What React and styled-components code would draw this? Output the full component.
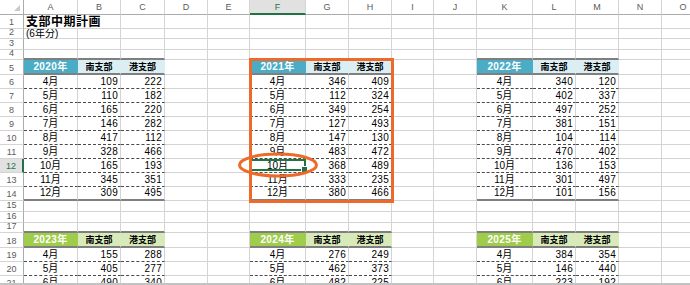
import React from 'react';
import styled, { createGlobalStyle } from 'styled-components';

const GRID = '#d4d4d4';
const HEAD_LINE = '#ababab';
const THICK = '#7f7f7f';
const DASH = '#4a4a4a';
const ACCENT = '#217346';
const ORANGE = '#ee6a2b';
const FONT = '"Liberation Sans", "Noto Sans CJK JP", sans-serif';

const THEMES = {
  aqua: { strong: '#4bacc6', light: '#daeef3' },
  green: { strong: '#9fcd4b', light: '#d8eab9' },
};

const COL_LETTERS = 'ABCDEFGHIJKLMNO'.split('');
const COL_W = [54, 43, 44, 43, 42, 56, 43, 43, 42, 43, 56, 43, 43, 43, 43];
const ROW_H = [14, 10, 11, 10, 15, 14, 14, 14, 14, 14, 14, 14, 14, 14, 11, 11, 10, 15, 14, 14, 14];
const HEAD_H = 15;
const MONTHS = ['4月', '5月', '6月', '7月', '8月', '9月', '10月', '11月', '12月'];

const TABLES = [
  { year: 2020, c: 1, r: 5, theme: 'aqua', rows: [[109, 222], [110, 182], [165, 220], [146, 282], [417, 112], [328, 466], [165, 193], [345, 351], [309, 495]] },
  { year: 2021, c: 6, r: 5, theme: 'aqua', rows: [[346, 409], [112, 324], [349, 254], [127, 493], [147, 130], [483, 472], [368, 489], [333, 235], [380, 466]] },
  { year: 2022, c: 11, r: 5, theme: 'aqua', rows: [[340, 120], [402, 337], [497, 252], [381, 151], [104, 114], [470, 402], [136, 153], [301, 497], [101, 156]] },
  { year: 2023, c: 1, r: 18, theme: 'green', rows: [[155, 288], [405, 277], [490, 340]] },
  { year: 2024, c: 6, r: 18, theme: 'green', rows: [[276, 249], [462, 373], [482, 225]] },
  { year: 2025, c: 11, r: 18, theme: 'green', rows: [[384, 354], [146, 440], [223, 192]] },
];

function buildCells() {
  const map = {};
  const set = (r, c, v) => {
    map[`${r}-${c}`] = v;
  };
  set(1, 1, { kind: 'title', text: '支部中期計画' });
  set(2, 1, { kind: 'note', text: '(6年分)' });
  TABLES.forEach((t) => {
    const th = THEMES[t.theme];
    for (let k = 0; k < 3; k += 1) set(t.r - 1, t.c + k, { kind: 'above' });
    set(t.r, t.c, { kind: 'year', text: `${t.year}年`, bg: th.strong });
    set(t.r, t.c + 1, { kind: 'name', text: '南支部', bg: th.light });
    set(t.r, t.c + 2, { kind: 'name', text: '港支部', bg: th.light });
    t.rows.forEach((vals, i) => {
      const r = t.r + 1 + i;
      const last = i === 8;
      set(r, t.c, { kind: 'month', text: MONTHS[i], last });
      set(r, t.c + 1, { kind: 'num', text: vals[0], last });
      set(r, t.c + 2, { kind: 'num', text: vals[1], last });
    });
  });
  return map;
}

const CELLS = buildCells();

const GlobalStyle = createGlobalStyle`
  html, body {
    margin: 0;
    padding: 0;
    background: #ffffff;
  }
  body {
    width: 690px;
    height: 285px;
    overflow: hidden;
    font-family: ${FONT};
  }
`;

const Window = styled.div`
  width: 690px;
  height: 285px;
  display: flex;
  flex-direction: column;
  overflow: hidden;
  background: #ffffff;
`;

const Viewport = styled.div`
  flex: 1;
  position: relative;
  overflow: hidden;
`;

const Footer = styled.div`
  flex: none;
  height: 2px;
  background: #c3c3c3;
`;

const Sheet = styled.div`
  display: grid;
  grid-template-columns: 24px ${COL_W.map((w) => `${w}px`).join(' ')};
  grid-template-rows: ${HEAD_H}px ${ROW_H.map((h) => `${h}px`).join(' ')};
  font-family: ${FONT};
`;

const Corner = styled.div`
  box-sizing: border-box;
  display: flex;
  align-items: flex-end;
  justify-content: flex-end;
  padding: 0 3px 3px 0;
  border-right: 1px solid ${HEAD_LINE};
  border-bottom: 1px solid ${HEAD_LINE};
`;

const CornerMark = styled.span`
  width: 0;
  height: 0;
  border-left: 6px solid transparent;
  border-bottom: 6px solid #c9c9c9;
`;

const ColHead = styled.div`
  box-sizing: border-box;
  display: flex;
  align-items: center;
  justify-content: center;
  font-size: 9px;
  color: ${(p) => (p.$active ? ACCENT : '#5b5b5b')};
  background: ${(p) => (p.$active ? '#e1e1e1' : '#ffffff')};
  border-right: 1px solid ${GRID};
  border-bottom: ${(p) => (p.$active ? `2px solid ${ACCENT}` : `1px solid ${HEAD_LINE}`)};
`;

const RowHead = styled.div`
  box-sizing: border-box;
  display: flex;
  align-items: flex-end;
  justify-content: center;
  padding-bottom: 1px;
  font-size: 9px;
  line-height: 1;
  color: ${(p) => (p.$active ? ACCENT : '#5b5b5b')};
  background: ${(p) => (p.$active ? '#e1e1e1' : '#ffffff')};
  border-right: ${(p) => (p.$active ? `2px solid ${ACCENT}` : `1px solid ${HEAD_LINE}`)};
  border-bottom: 1px solid ${GRID};
`;

const BOTTOM = {
  grid: `1px solid ${GRID}`,
  thick: `2px solid ${THICK}`,
  dashed: `1px dashed ${DASH}`,
};

const JUSTIFY = { left: 'flex-start', center: 'center', right: 'flex-end' };

const Cell = styled.div`
  box-sizing: border-box;
  position: relative;
  min-width: 0;
  display: flex;
  align-items: ${(p) => (p.$low ? 'flex-end' : 'center')};
  justify-content: ${(p) => JUSTIFY[p.$align || 'left']};
  padding: 0 2px ${(p) => (p.$low ? '1px' : '0')} 2px;
  white-space: nowrap;
  font-size: ${(p) => p.$size || 10}px;
  line-height: 1;
  color: ${(p) => p.$color || '#000000'};
  font-weight: ${(p) => (p.$bold ? 700 : 400)};
  letter-spacing: ${(p) => p.$spacing || 0}px;
  background: ${(p) => p.$bg || '#ffffff'};
  border-right: 1px solid ${(p) => (p.$fill ? 'transparent' : GRID)};
  border-bottom: ${(p) => BOTTOM[p.$bottom || 'grid']};
  z-index: ${(p) => (p.$over ? 1 : 'auto')};
`;

const Selection = styled.div`
  position: absolute;
  top: 0;
  left: -1px;
  right: -1px;
  bottom: 1px;
  border: 2px solid ${ACCENT};
  pointer-events: none;
  z-index: 2;
`;

const FillHandle = styled.span`
  position: absolute;
  right: -4px;
  bottom: -4px;
  width: 5px;
  height: 5px;
  background: ${ACCENT};
  border: 1px solid #ffffff;
`;

const Highlight = styled.div`
  position: absolute;
  left: 249px;
  top: 58px;
  width: 145px;
  height: 145px;
  box-sizing: border-box;
  border: 3px solid ${ORANGE};
  pointer-events: none;
  z-index: 3;
`;

const Ring = styled.svg`
  position: absolute;
  left: 236px;
  top: 151px;
  width: 84px;
  height: 28px;
  pointer-events: none;
  z-index: 4;
`;

function cellProps(cell) {
  if (!cell) return {};
  switch (cell.kind) {
    case 'title':
      return { $size: 12, $bold: true, $over: true, $fill: true, $spacing: 0.5 };
    case 'note':
      return { $size: 10 };
    case 'above':
      return { $bottom: 'thick' };
    case 'year':
      return { $bg: cell.bg, $fill: true, $bold: true, $color: '#ffffff', $align: 'center', $bottom: 'thick', $size: 10, $low: true, $spacing: 0.4 };
    case 'name':
      return { $bg: cell.bg, $fill: true, $bold: true, $align: 'center', $bottom: 'thick', $size: 9, $low: true };
    case 'month':
      return { $align: 'center', $bottom: cell.last ? 'thick' : 'dashed', $low: true };
    case 'num':
      return { $align: 'right', $bottom: cell.last ? 'thick' : 'dashed', $low: true, $spacing: 0.3 };
    default:
      return {};
  }
}

export default function App() {
  return (
    <Window>
      <GlobalStyle />
      <Viewport>
        <Sheet>
          <Corner>
            <CornerMark />
          </Corner>
          {COL_LETTERS.map((l) => (
            <ColHead key={l} $active={l === 'F'}>
              {l}
            </ColHead>
          ))}
          {ROW_H.map((_, ri) => {
            const r = ri + 1;
            return (
              <React.Fragment key={r}>
                <RowHead $active={r === 12}>{r}</RowHead>
                {COL_LETTERS.map((l, ci) => {
                  const c = ci + 1;
                  const cell = CELLS[`${r}-${c}`];
                  const selected = r === 12 && l === 'F';
                  return (
                    <Cell key={l} {...cellProps(cell)}>
                      {cell && cell.text !== undefined ? cell.text : null}
                      {selected && (
                        <Selection>
                          <FillHandle />
                        </Selection>
                      )}
                    </Cell>
                  );
                })}
              </React.Fragment>
            );
          })}
        </Sheet>
        <Highlight />
        <Ring viewBox="0 0 84 28">
          <ellipse cx="42" cy="14" rx="38.5" ry="11" fill="none" stroke={ORANGE} strokeWidth="3" />
        </Ring>
      </Viewport>
      <Footer />
    </Window>
  );
}
